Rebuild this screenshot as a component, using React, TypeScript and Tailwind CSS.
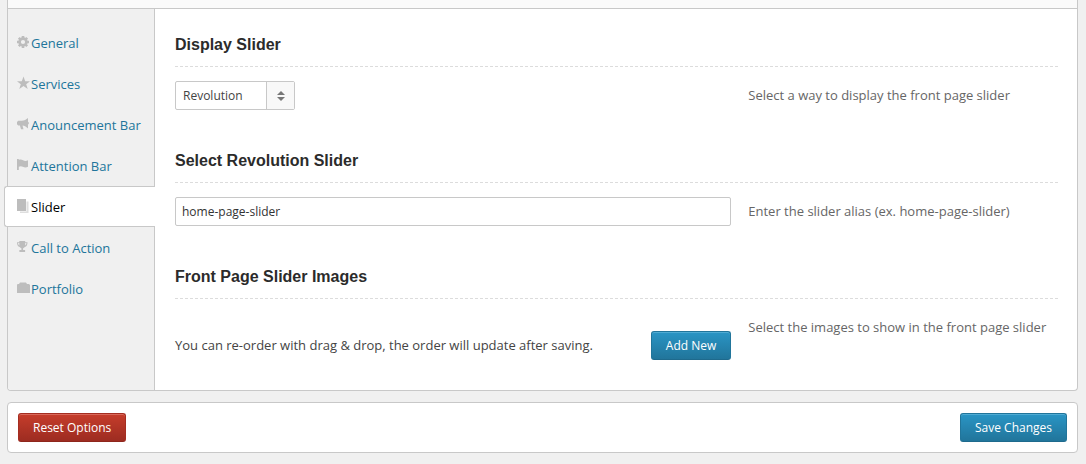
import { useState } from "react";
import type { ReactNode } from "react";

const icons: Record<string, ReactNode> = {
  General: (
    <>
      <circle cx="6" cy="6" r="3.4" fill="none" stroke="currentColor" strokeWidth="2.6" />
      <path
        d="M6 0v2.400M6 9.600V12M0 6h2.400M9.600 6h2.400M1.800 1.800l1.600 1.600M8.600 8.600l1.600 1.600M10.200 1.800 8.600 3.400M3.400 8.600l-1.600 1.600"
        stroke="currentColor"
        strokeWidth="2.6"
      />
    </>
  ),
  Services: <path d="M6.500-.5 8.200 4.200H13L9.200 7.200l1.500 4.900-4.200-3-4.200 3 1.500-4.900L0 4.200h4.800z" />,
  "Anouncement Bar": (
    <path d="M11 0v3.700c1.200.2 1.200 2.600 0 2.800V10.500C9 8.600 7.300 7.800 5.500 7.600l1 3.600H4L2.900 7.500H1.200L0 6.200V4.100l1.200-1.300h3.600C7.200 2.600 9.200 1.600 11 0z" />
  ),
  "Attention Bar": (
    <path d="M0 0h1.800v1C3.200.2 4.600.4 6 1.300c1.700.9 3.200.9 5 0v6.400c-1.800 1-3.400 1-5.100 0-1.500-.8-2.800-.7-4.100.1V11H0z" />
  ),
  Slider: (
    <>
      <path d="M0-1h9v12H0z" />
      <path d="M9.500 1.500h2V13H3v-1.500h6.500z" opacity=".5" />
    </>
  ),
  "Call to Action": (
    <path d="M2.300 0h5.900v1.200h2.300c0 2.700-.9 4.400-2.700 4.700-.5.700-1 1.100-1.700 1.300v1.900h2V11H2.400V9.100h2V7.200C3.700 7 3.200 6.600 2.700 5.900.9 5.600 0 3.900 0 1.200h2.300zM1.100 2.100c.1 1.200.4 1.900 1.200 2.300V2.100zm7.100 0v2.300c.8-.4 1.100-1.100 1.200-2.300z" />
  ),
  Portfolio: <path d="M0 2.500 1 2h1L3 .5h6L10 2h2l1 1v8H0z" />,
};

const tabs = Object.keys(icons);

function Section({ title, help, children }: { title: string; help: string; children: ReactNode }) {
  return (
    <section>
      <h2 className="border-b border-dashed border-[#dcdcdc] pb-[11px] font-['Liberation_Sans',sans-serif] text-base leading-5 font-bold text-[#2b2b2b]">
        {title}
      </h2>
      <div className="flex gap-[17px] pt-3.5">
        <div className="w-[63%] shrink-0">{children}</div>
        <p className="grow pt-1 leading-5 text-[#666]">{help}</p>
      </div>
    </section>
  );
}

function Button({ children, danger }: { children: ReactNode; danger?: boolean }) {
  const tone = danger
    ? "border-[#a52d21] border-b-[#8e261c] from-[#c63d2b] to-[#9d2c21] shadow-[inset_0_1px_0_#d9685a]"
    : "border-[#21759b] border-b-[#1e6a8d] from-[#2a95c5] to-[#21759b] shadow-[inset_0_1px_0_#4fabd3]";
  return (
    <button
      type="button"
      className={`h-[29px] shrink-0 cursor-pointer rounded-[3px] border bg-linear-to-b px-3.5 text-xs leading-none text-white ${tone}`}
    >
      {children}
    </button>
  );
}

export default function App() {
  const [active, setActive] = useState("Slider");
  return (
    <div className="min-h-screen bg-[#f0f0f0] pr-2 pb-3 pl-[7px] font-['Open_Sans',sans-serif] text-[13px] text-[#444]">
      <main className="rounded-b-[4px] border border-t-0 border-[#c8c8c8] bg-white">
        <div className="h-[9px] border-b border-[#c8c8c8] bg-[#fafafa]" />
        <div className="flex">
          <nav className="w-[147px] shrink-0 rounded-bl-[3px] border-r border-[#c8c8c8] bg-[#f0f0f0] pt-[13px]">
            {tabs.map((tab) => (
              <a
                key={tab}
                href="#"
                onClick={(e) => {
                  e.preventDefault();
                  setActive(tab);
                }}
                className={`flex h-[41px] items-center gap-px border-y pt-0.5 whitespace-nowrap ${
                  tab === active
                    ? "-mr-px -ml-1 rounded-l-[3px] border-l border-[#c8c8c8] bg-white pl-3 text-black"
                    : "border-transparent pl-[9px] text-[#21759b]"
                }`}
              >
                <svg viewBox="0 0 13 13" className="mb-0.5 h-[13px] w-[13px] shrink-0 overflow-visible text-[#bdbdbd]" fill="currentColor" aria-hidden="true">
                  {icons[tab]}
                </svg>
                {tab}
              </a>
            ))}
          </nav>
          <div className="flex min-w-0 grow flex-col gap-10 pt-[26px] pr-[19px] pb-[30px] pl-5 [&>section+section]:pt-px">
            <Section title="Display Slider" help="Select a way to display the front page slider">
              <div className="relative w-[120px]">
                <select
                  aria-label="Display Slider"
                  className="block h-[29px] w-full appearance-none rounded-[2px] border border-[#c8c8c8] bg-white pr-8 pl-[7px] text-xs text-[#444]"
                >
                  <option>Revolution</option>
                </select>
                <span className="pointer-events-none absolute inset-y-px right-px flex w-7 items-center justify-center border-l border-[#c8c8c8] bg-[#f8f8f8]">
                  <svg viewBox="0 0 8 10" className="h-2.5 w-2" fill="#777" aria-hidden="true">
                    <path d="M4 0 8 4H0zM4 10 0 6h8z" />
                  </svg>
                </span>
              </div>
            </Section>
            <Section title="Select Revolution Slider" help="Enter the slider alias (ex. home-page-slider)">
              <input
                type="text"
                aria-label="Select Revolution Slider"
                defaultValue="home-page-slider"
                className="block h-[29px] w-full rounded-[2px] border border-[#c8c8c8] bg-white px-1.5 text-xs text-[#333]"
              />
            </Section>
            <Section title="Front Page Slider Images" help="Select the images to show in the front page slider">
              <div className="flex items-center justify-between pt-[18px]">
                <p>You can re-order with drag &amp; drop, the order will update after saving.</p>
                <Button>Add New</Button>
              </div>
            </Section>
          </div>
        </div>
      </main>
      <footer className="mt-[11px] flex justify-between rounded-[4px] border border-[#c8c8c8] bg-white p-2.5">
        <Button danger>Reset Options</Button>
        <Button>Save Changes</Button>
      </footer>
    </div>
  );
}
